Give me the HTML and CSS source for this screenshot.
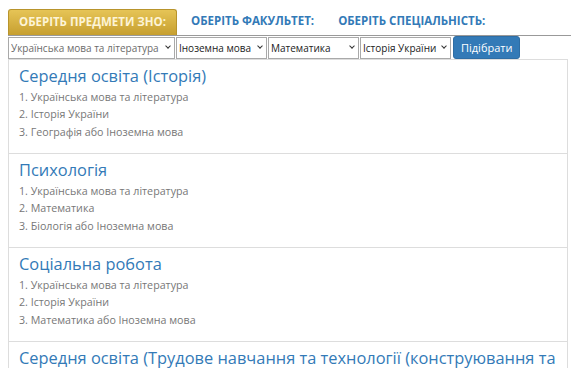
FILE: index.html
```html
<!DOCTYPE html>
<html lang="uk">
<head>
  <meta charset="UTF-8">
  <title>Підбір спеціальності</title>
  <link rel="stylesheet" href="styles.css">
</head>
<body>
  <div class="tabs">
    <div class="tab active">Оберіть предмети ЗНО:</div>
    <div class="tab">Оберіть факультет:</div>
    <div class="tab">Оберіть спеціальність:</div>
  </div>

  <div class="filters">
    <span class="select-wrap first">
      <select class="subject muted">
        <option>Українська мова та література</option>
      </select>
    </span>
    <span class="select-wrap w91">
      <select class="subject">
        <option>Іноземна мова</option>
      </select>
    </span>
    <span class="select-wrap w91">
      <select class="subject">
        <option>Математика</option>
      </select>
    </span>
    <span class="select-wrap w91">
      <select class="subject">
        <option>Історія України</option>
      </select>
    </span>
    <button class="pick-btn">Підібрати</button>
  </div>

  <div class="list">
    <div class="item">
      <div class="item-title">Середня освіта (Історія)</div>
      <div class="item-line">1. Українська мова та література</div>
      <div class="item-line">2. Історія України</div>
      <div class="item-line">3. Географія або Іноземна мова</div>
    </div>
    <div class="item">
      <div class="item-title">Психологія</div>
      <div class="item-line">1. Українська мова та література</div>
      <div class="item-line">2. Математика</div>
      <div class="item-line">3. Біологія або Іноземна мова</div>
    </div>
    <div class="item">
      <div class="item-title">Соціальна робота</div>
      <div class="item-line">1. Українська мова та література</div>
      <div class="item-line">2. Історія України</div>
      <div class="item-line">3. Математика або Іноземна мова</div>
    </div>
    <div class="item">
      <div class="item-title">Середня освіта (Трудове навчання та технології (конструювання та моделювання))</div>
      <div class="item-line">1. Українська мова та література</div>
      <div class="item-line">2. Математика</div>
      <div class="item-line">3. Фізика або Іноземна мова</div>
    </div>
  </div>
</body>
</html>
```

FILE: styles.css
```css
:root {
  --blue: #337ab7;
  --blue-dark: #2e6da4;
  --gray-text: #777;
  --border: #ddd;
}

* {
  box-sizing: border-box;
}

body {
  margin: 0;
  padding: 9px 8px 0;
  font-family: "Open Sans", "Noto Sans", sans-serif;
  background: #fff;
  overflow: hidden;
  height: 368px;
}

.tabs {
  display: flex;
  border-bottom: 1px solid #999;
}

.tab {
  height: 26px;
  padding: 0 12px;
  font-size: 11.5px;
  font-weight: 700;
  line-height: 24px;
  text-transform: uppercase;
  color: var(--blue);
}

.tab.active {
  color: #fdf4d6;
  background: linear-gradient(to bottom, #e6c456, #c69f30);
  border: 1px solid #b8942c;
  border-bottom: none;
  border-radius: 3px 3px 0 0;
  padding: 0 10px;
  margin-right: 2px;
}

.filters {
  display: flex;
  align-items: center;
  gap: 1px;
  height: 23px;
}

.select-wrap {
  position: relative;
  display: block;
}

/* small chevron drawn over the select */
.select-wrap::after {
  content: "";
  position: absolute;
  top: 7px;
  right: 5px;
  width: 3px;
  height: 3px;
  border-right: 1.5px solid #333;
  border-bottom: 1.5px solid #333;
  transform: rotate(45deg);
  pointer-events: none;
}

.select-wrap.first {
  width: 167px;
}

.select-wrap.w91 {
  width: 91px;
}

.subject {
  display: block;
  width: 100%;
  height: 22px;
  font-family: inherit;
  font-size: 10px;
  color: #222;
  border: 1px solid #a9a9a9;
  background: #fff;
  padding: 0 12px 0 2px;
  border-radius: 0;
  appearance: none;
  -webkit-appearance: none;
}

.subject.muted {
  color: #6b6b6b;
}

.pick-btn {
  height: 23px;
  margin-left: 1px;
  padding: 0 7px;
  font-family: inherit;
  font-size: 11px;
  color: #fff;
  background: var(--blue);
  border: 1px solid var(--blue-dark);
  border-radius: 3px;
  cursor: pointer;
}

.list {
  border: 1px solid var(--border);
  border-bottom: none;
  margin-right: 3px;
}

.item {
  height: 94px;
  padding: 5px 10px 0;
  border-bottom: 1px solid var(--border);
}

.item-title {
  font-size: 16.4px;
  line-height: 22px;
  color: var(--blue);
  margin-bottom: 1.5px;
}

.item-line {
  font-size: 10.7px;
  line-height: 17.5px;
  color: var(--gray-text);
}
```
